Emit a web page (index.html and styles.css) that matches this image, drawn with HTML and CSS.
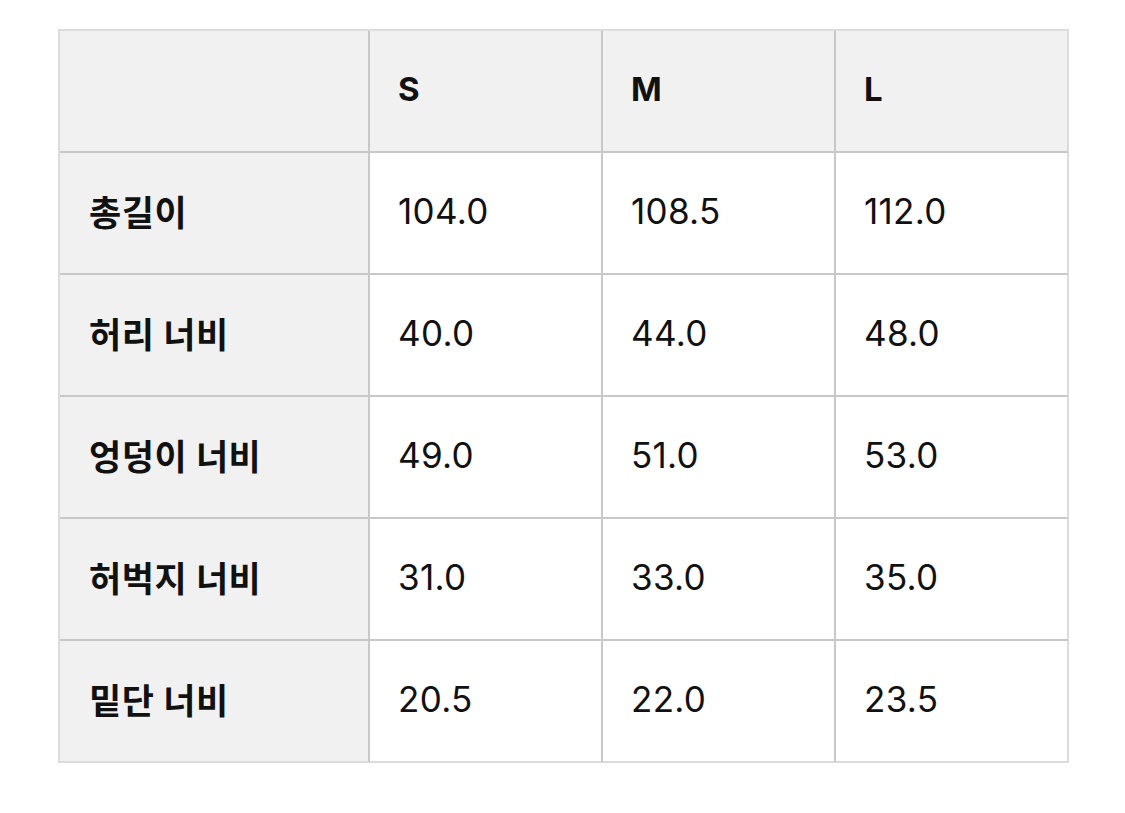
FILE: index.html
```html
<!DOCTYPE html>
<html lang="ko">
<head>
<meta charset="utf-8">
<link rel="stylesheet" href="styles.css">
</head>
<body>
<div class="page">
<table class="size-table">
  <colgroup>
    <col class="c-label"><col class="c-size"><col class="c-size"><col class="c-size">
  </colgroup>
  <thead>
    <tr><th class="label"></th><th>S</th><th>M</th><th class="last">L</th></tr>
  </thead>
  <tbody>
    <tr><th class="label">총길이</th><td>104.0</td><td>108.5</td><td class="last">112.0</td></tr>
    <tr><th class="label">허리 너비</th><td>40.0</td><td>44.0</td><td class="last">48.0</td></tr>
    <tr><th class="label">엉덩이 너비</th><td>49.0</td><td>51.0</td><td class="last">53.0</td></tr>
    <tr><th class="label">허벅지 너비</th><td>31.0</td><td>33.0</td><td class="last">35.0</td></tr>
    <tr class="bottom"><th class="label">밑단 너비</th><td>20.5</td><td>22.0</td><td class="last">23.5</td></tr>
  </tbody>
</table>
</div>
</body>
</html>
```
FILE: styles.css
```css
html, body {
  margin: 0;
  background: #ffffff;
}
.page {
  padding: 29px 0 0 58px;
  font-family: "Inter", "Noto Sans CJK KR", sans-serif;
  color: #111111;
}
.size-table {
  border-collapse: separate;
  border-spacing: 0;
  width: 1008px;
  table-layout: fixed;
  border-top: 2px solid #dcdcdc;
  border-left: 2px solid #dcdcdc;
}
.c-label { width: 310px; }
.c-size { width: 233px; }
.size-table th,
.size-table td {
  height: 122px;
  padding: 0 0 4px 28px;
  text-align: left;
  vertical-align: middle;
  font-size: 34px;
  border-right: 2px solid #c8c8c8;
  border-bottom: 2px solid #c8c8c8;
  box-sizing: border-box;
}
.size-table td { font-weight: 400; font-size: 35px; letter-spacing: 0.3px; }
.size-table th { font-weight: 700; }
.size-table thead th { background: #f1f1f1; font-size: 33px; }
.size-table th.label { background: #f1f1f1; font-size: 35px; letter-spacing: 0.5px; padding-left: 29px; padding-bottom: 6px; }
.size-table .last { border-right-color: #dcdcdc; }
.size-table tr.bottom th,
.size-table tr.bottom td { border-bottom-color: #dcdcdc; }
```
